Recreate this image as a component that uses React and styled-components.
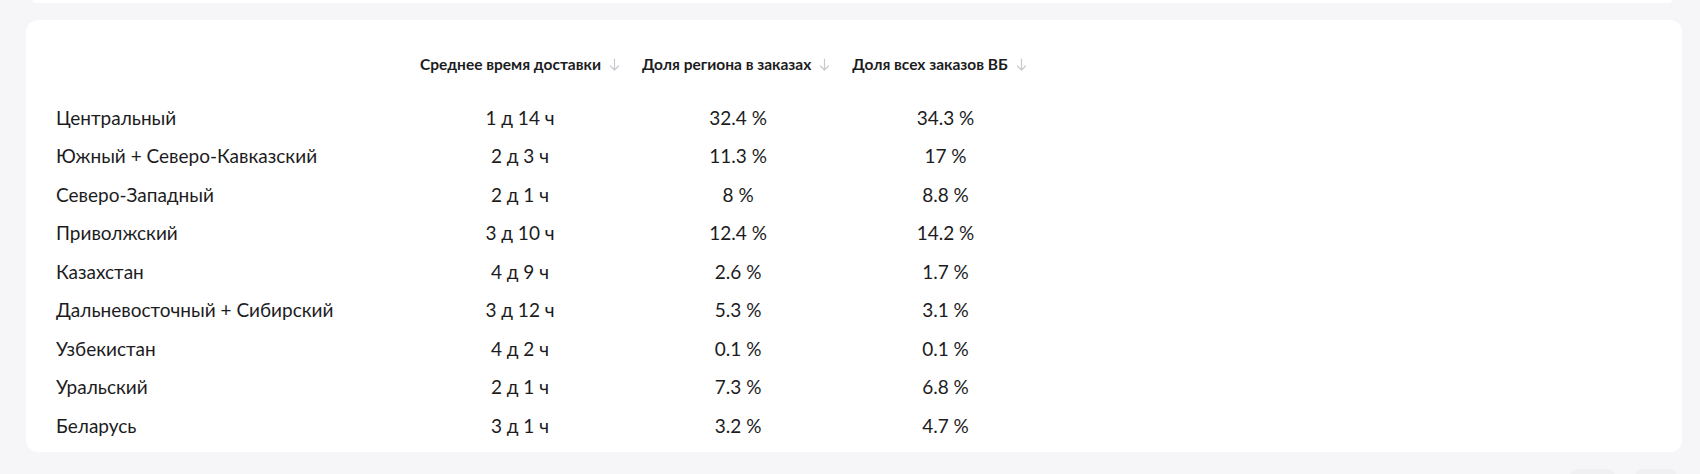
import React from "react";
import styled, { createGlobalStyle } from "styled-components";

const GlobalStyle = createGlobalStyle`
  body {
    margin: 0;
    background: #f6f6f8;
    font-family: Lato, "Noto Sans", sans-serif;
    color: #1c1c1e;
  }
`;

const Page = styled.div`
  height: 474px;
  overflow: hidden;
  padding: 0 18px 0 26px;
`;

const PrevCardEdge = styled.div`
  height: 3px;
  margin: 0 10px 0 7px;
  background: #fff;
  border-radius: 0 0 12px 12px;
`;

const Card = styled.div`
  margin-top: 17px;
  background: #fff;
  border-radius: 12px;
  padding: 32px 30px 8px;
  height: 432px;
  box-sizing: border-box;
`;

const Grid = styled.div`
  display: grid;
  grid-template-columns: 342px repeat(3, max-content);
  column-gap: 22px;
`;

const HeadCell = styled.div`
  display: flex;
  align-items: center;
  gap: 8px;
  height: 24px;
  margin-bottom: 22px;
  font-size: 15.5px;
  font-weight: 700;
  white-space: nowrap;
`;

const SortArrow = styled.svg`
  width: 11px;
  height: 13px;
  color: #c9c9cf;
`;

const Cell = styled.div`
  height: 38.5px;
  display: flex;
  align-items: center;
  justify-content: ${(p) => (p.$name ? "flex-start" : "center")};
  padding-left: ${(p) => p.$shift || 0}px;
  font-size: 19px;
  white-space: nowrap;
`;

const Footer = styled.div`
  display: flex;
  justify-content: flex-end;
  gap: 20px;
  margin-top: 17px;
  padding-right: 5px;
`;

const GhostButton = styled.div`
  width: ${(p) => p.$w}px;
  height: 30px;
  border-radius: 8px;
  background: #f0f0f3;
`;

const columns = [
  "Среднее время доставки",
  "Доля региона в заказах",
  "Доля всех заказов ВБ",
];

const shifts = [0, 0, 4, 12];

const rows = [
  ["Центральный", "1 д 14 ч", "32.4 %", "34.3 %"],
  ["Южный + Северо-Кавказский", "2 д 3 ч", "11.3 %", "17 %"],
  ["Северо-Западный", "2 д 1 ч", "8 %", "8.8 %"],
  ["Приволжский", "3 д 10 ч", "12.4 %", "14.2 %"],
  ["Казахстан", "4 д 9 ч", "2.6 %", "1.7 %"],
  ["Дальневосточный + Сибирский", "3 д 12 ч", "5.3 %", "3.1 %"],
  ["Узбекистан", "4 д 2 ч", "0.1 %", "0.1 %"],
  ["Уральский", "2 д 1 ч", "7.3 %", "6.8 %"],
  ["Беларусь", "3 д 1 ч", "3.2 %", "4.7 %"],
];

function Arrow() {
  return (
    <SortArrow viewBox="0 0 11 13" fill="none">
      <path
        d="M5.5 1v11M1.5 8l4 4 4-4"
        stroke="currentColor"
        strokeWidth="1.2"
        strokeLinecap="round"
        strokeLinejoin="round"
      />
    </SortArrow>
  );
}

export default function App() {
  return (
    <Page>
      <GlobalStyle />
      <PrevCardEdge />
      <Card>
        <Grid>
          <HeadCell />
          {columns.map((c) => (
            <HeadCell key={c}>
              {c}
              <Arrow />
            </HeadCell>
          ))}
          {rows.map((r) =>
            r.map((v, i) => (
              <Cell key={r[0] + i} $name={i === 0} $shift={shifts[i]}>
                {v}
              </Cell>
            ))
          )}
        </Grid>
      </Card>
      <Footer>
        <GhostButton $w={45} />
        <GhostButton $w={42} />
      </Footer>
    </Page>
  );
}
